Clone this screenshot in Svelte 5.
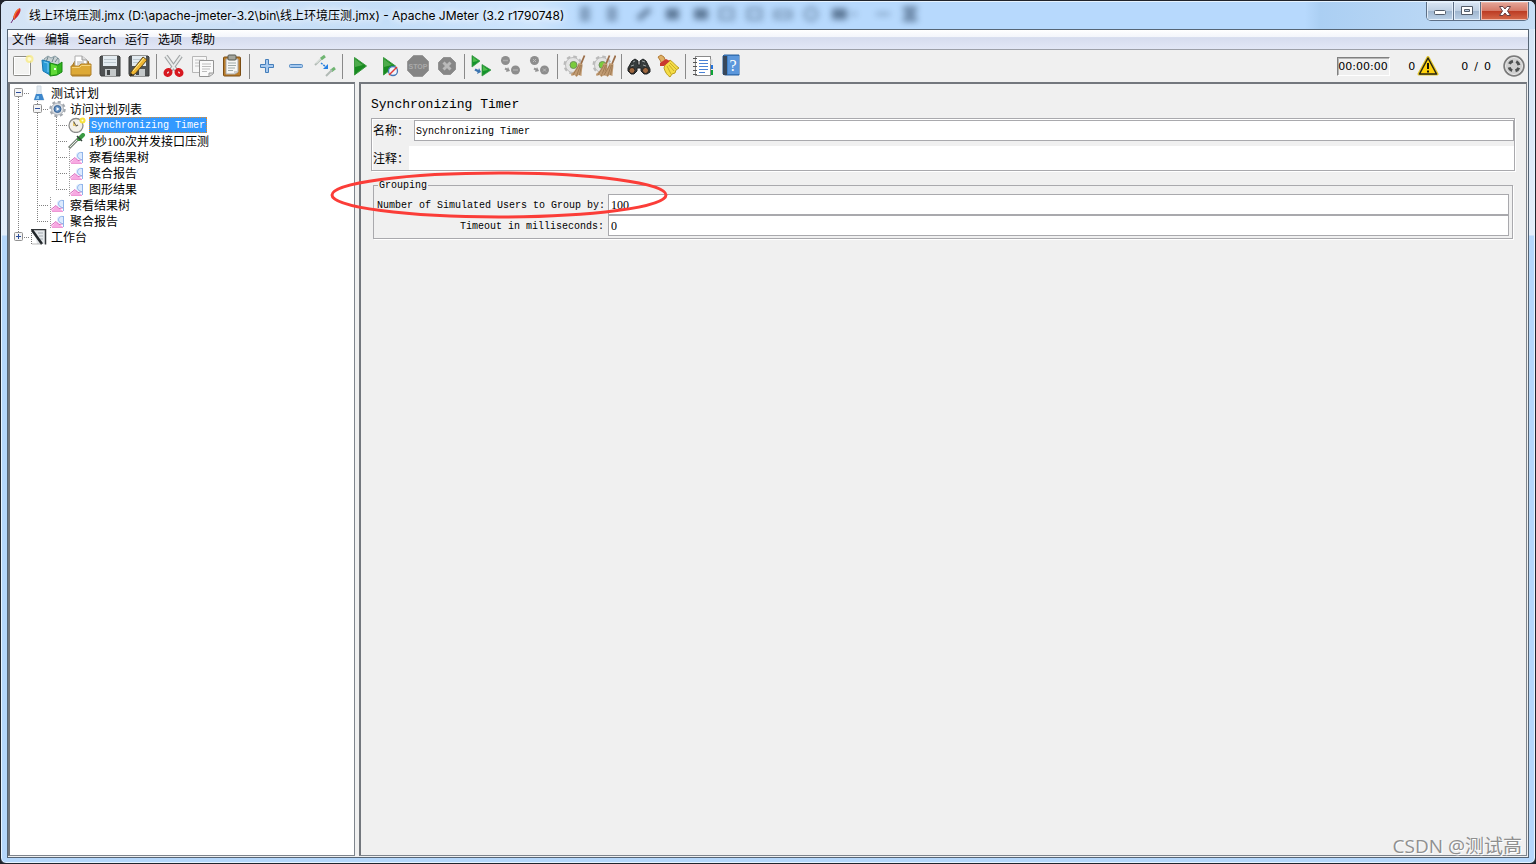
<script lang="ts">
	type Cell = 'line' | 'tee' | 'end' | 'minus' | 'plus'
	type Node = { label: string; icon: string; cells: Cell[]; latin?: boolean }

	const menus = ['文件', '编辑', 'Search', '运行', '选项', '帮助']

	const tools: string[][] = [
		['new', 'templates', 'open', 'save', 'save as'],
		['cut', 'copy', 'paste'],
		['expand', 'collapse', 'toggle'],
		['start', 'start no pauses', 'stop', 'shutdown'],
		['remote start', 'remote stop', 'remote shutdown'],
		['clear', 'clear all'],
		['search', 'reset search'],
		['functions', 'help']
	]

	const nodes: Node[] = [
		{ label: '测试计划', icon: 'plan', cells: ['minus'] },
		{ label: '访问计划列表', icon: 'gear', cells: ['line', 'minus'] },
		{ label: 'Synchronizing Timer', icon: 'timer', cells: ['line', 'line', 'tee'], latin: true },
		{ label: '1秒100次并发接口压测', icon: 'sampler', cells: ['line', 'line', 'tee'] },
		{ label: '察看结果树', icon: 'chart', cells: ['line', 'line', 'tee'] },
		{ label: '聚合报告', icon: 'chart', cells: ['line', 'line', 'tee'] },
		{ label: '图形结果', icon: 'chart', cells: ['line', 'line', 'end'] },
		{ label: '察看结果树', icon: 'chart', cells: ['line', 'tee'] },
		{ label: '聚合报告', icon: 'chart', cells: ['line', 'end'] },
		{ label: '工作台', icon: 'bench', cells: ['plus'] }
	]

	let selected = $state(2)
	let name = $state('Synchronizing Timer')
	let comment = $state('')
	let groupSize = $state('100')
	let timeout = $state('0')
</script>

{#snippet cell(kind: Cell, first: boolean)}
	<svg class="cell" viewBox="0 0 19 16" aria-hidden="true">
		<g stroke="#808080" stroke-dasharray="1 1" fill="none">
			{#if !first}<path d="M8.5 0V8" />{/if}
			{#if kind !== 'end' && kind !== 'plus'}<path d="M8.5 8V16" />{/if}
			{#if kind !== 'line'}<path d="M8 8.5H19" />{/if}
		</g>
		{#if kind === 'minus' || kind === 'plus'}
			<rect x="4.5" y="3.5" width="8" height="8" rx="1" fill="#f4f4f4" stroke="#919191" />
			<path d="M6 7.5h5" stroke="#2b4d9b" />
			{#if kind === 'plus'}<path d="M8.5 5v5" stroke="#2b4d9b" />{/if}
		{/if}
	</svg>
{/snippet}

{#snippet broom(x: number)}
	<g transform="translate({x} 0)">
		<path d="M21.5 1.500L18 10" stroke="#9a6d48" stroke-width="1.800" />
		<path d="M15.500 9l4 1c0 4-1 8-1 12l-3-1-2 2-2-2-3 1-.5-2c4-3 6-6 7.500-11z" fill="#c19b72" />
		<path d="M16 11l-6 10M17.500 11l-4 11M18.500 11l-2 10" stroke="#98734d" stroke-width=".8" />
	</g>
{/snippet}

{#snippet smallGear()}
	<circle cx="10" cy="11" r="8" stroke="#b9b9b9" stroke-width="3" stroke-dasharray="3.500 2.780" />
	<circle cx="10" cy="11" r="7.500" fill="#e4e4e4" stroke="#bdbdbd" />
	<circle cx="10.500" cy="11" r="3.500" fill="#79cc3c" stroke="#6d9357" />
{/snippet}

{#snippet tool(kind: string)}
	<svg class="icon" viewBox="0 0 24 24" fill="none" aria-hidden="true">
		{#if kind === 'new'}
			<rect x="2.500" y="2.500" width="17" height="19" rx="1" fill="#f3f3f1" stroke="#8d8d89" />
			<rect x="3.500" y="3.500" width="15" height="17" stroke="#fff" />
			<circle cx="18.500" cy="5" r="4" fill="#f7eb86" opacity=".8" />
			<circle cx="18.500" cy="5" r="2" fill="#fffbd0" />
		{:else if kind === 'templates'}
			<path d="M4 5l4-3 3 2 4-2 4 3v8H4z" fill="#c8d1d3" stroke="#879ca4" />
			<path d="M8 3l-2 5M14 3l-2 5M18 4l-3 4" stroke="#6e838a" />
			<path d="M2 6l8 2v13l-7-4z" fill="#2b9bd7" stroke="#1677b3" />
			<path d="M4 8l4 1v9" stroke="#78cdf4" />
			<path d="M10 9l8 2 4-3v10l-5 3-7 1z" fill="#32b41d" stroke="#178711" />
			<path d="M11 10l6 2v8l-6 1z" fill="#62da38" />
			<path d="M14 14h2v2h-2z" fill="#e9ffe0" />
		{:else if kind === 'open'}
			<path d="M3 12l3-5h13l2 6v9H3z" fill="#c68b1f" stroke="#a57624" />
			<path d="M6 2h7l5 4v8H6z" fill="#fff" stroke="#acacac" />
			<path d="M13 2v4h5" fill="#ddd" stroke="#999" />
			<path d="M8 8h7M8 10h8" stroke="#aaa" />
			<path d="M2 12h8l2-2h10v11H2z" fill="#dda936" stroke="#b1812a" />
			<path d="M3 13.500h7.500l2-2h9" stroke="#f6d67f" />
		{:else if kind === 'save' || kind === 'save as'}
			<path d="M3 2h18l1 1v19H3l-1-2V3z" fill="#505354" stroke="#3a3c3d" />
			<rect x="5" y="2" width="14" height="10" fill="#e3ebf0" />
			<path d="M6 5.500h12M6 8.500h12" stroke="#bcc8cf" />
			<rect x="7" y="15" width="11" height="7" fill="#c4c8c9" />
			<rect x="9" y="16" width="3" height="5" fill="#424647" />
			{#if kind === 'save as'}
				<path d="M4 18L16 3l4 3L8 20l-5 2z" fill="#efb632" stroke="#5f4719" />
				<path d="M6 17L17 4" stroke="#fff09a" />
				<path d="M3 22l1-3 2 2z" fill="#222" />
			{/if}
		{:else if kind === 'cut'}
			<path d="M4 2l10 14M19 2L9 16" stroke="#a1a5a6" stroke-width="4" />
			<path d="M4 2l10 14M19 2L9 16" stroke="#e9ebeb" stroke-width="2" />
			<ellipse cx="6" cy="18.500" rx="2.500" ry="3" stroke="#d71820" stroke-width="3.500" transform="rotate(45 6 18.500)" />
			<ellipse cx="17" cy="18.500" rx="2.500" ry="3" stroke="#d71820" stroke-width="3.500" transform="rotate(-45 17 18.500)" />
		{:else if kind === 'copy'}
			<path d="M1.500 2.500h14v16h-14z" fill="#f7f7f7" stroke="#b7b7b7" />
			<path d="M4 6h9M4 9h5M4 12h4" stroke="#c2c2c2" />
			<path d="M8.500 6.500h14v13l-4 3h-10z" fill="#fafafa" stroke="#939393" />
			<path d="M18 22v-3h4" fill="#ddd" stroke="#999" />
			<path d="M11 10h9M11 12.500h9M11 15h8M11 17.500h5" stroke="#bcbcbc" />
		{:else if kind === 'paste'}
			<rect x="3.500" y="3" width="17" height="19" rx="1" fill="#bb7d29" stroke="#7b4d14" />
			<path d="M6 5h12v13l-3 2H6z" fill="#f6f6f3" stroke="#aaa" />
			<rect x="8" y="1" width="8" height="5" rx="1" fill="#a2a49c" stroke="#555850" />
			<path d="M8 9h8M8 11.500h8M8 14h7M8 16.500h5" stroke="#9eaaa8" />
			<path d="M14 20v-3h4" fill="#ccc" />
		{:else if kind === 'expand'}
			<path d="M10.500 5.500h3v5h5v3h-5v5h-3v-5h-5v-3h5z" fill="#a6c9ef" stroke="#457eba" />
		{:else if kind === 'collapse'}
			<rect x="5.500" y="10.500" width="13" height="3" rx="1" fill="#a6c9ef" stroke="#5288c0" />
		{:else if kind === 'toggle'}
			<path d="M2 11l7-7" stroke="#b1bab5" stroke-width="2" />
			<path d="M3 9.500l6-6" stroke="#f4faf4" />
			<path d="M8 5l4-3M18 17l4-3" stroke="#6fb571" stroke-width="3" />
			<path d="M13 22l6-6" stroke="#b1bab5" stroke-width="2" />
			<path d="M8 9l5 4" stroke="#2f82dd" stroke-width="1.500" stroke-dasharray="2 1" />
			<path d="M15 10v5h-5z" fill="#2680e4" />
		{:else if kind === 'start' || kind === 'start no pauses'}
			<path d="M6.500 3.500l12 8.500-12 9z" fill="#198b21" stroke="#3c9a41" />
			<path d="M7 5l8 6-8 2z" fill="#65bb60" opacity=".7" />
			{#if kind === 'start no pauses'}
				<circle cx="16" cy="17" r="4.500" fill="#eef4fc" stroke="#4778b7" stroke-width="1.300" />
				<path d="M12 21l8-8" stroke="#e33a35" stroke-width="1.500" />
			{/if}
		{:else if kind === 'stop'}
			<path d="M7.500 1.500h9l6 6v9l-6 6h-9l-6-6v-9z" fill="#858585" stroke="#999" />
			<text x="12" y="15" text-anchor="middle" class="stop-text">STOP</text>
		{:else if kind === 'shutdown'}
			<path d="M8.500 3.500h7l5 5v7l-5 5h-7l-5-5v-7z" fill="#878787" stroke="#939393" />
			<path d="M8.500 8.500l7 7m0-7l-7 7" stroke="#bababa" stroke-width="3" />
		{:else if kind === 'remote start'}
			<path d="M2 1.500l8 5.500-8 6zM12 10.500l9 5.500-9 6z" fill="#13942b" stroke="#3c9948" stroke-width=".8" />
			<path d="M3 3l5 4-5 1zM13 12l5 4-5 1z" fill="#4fba4c" />
			<path d="M5 15.500l4 2" stroke="#3b74b0" stroke-width="2.500" />
			<path d="M9 14l2 4-4 2z" fill="#3b74b0" />
		{:else if kind.startsWith('remote')}
			<circle cx="6.500" cy="6.500" r="4.500" fill="#8d8d8d" />
			<circle cx="16.500" cy="16" r="4.500" fill="#8d8d8d" />
			<path d="M6 14.500l3 1.500" stroke="#969696" stroke-width="2" />
			<path d="M9 13l2 4-4 1z" fill="#929292" />
			{#if kind === 'remote stop'}
				<path d="M4 6.500h5M14 16h5" stroke="#aaa" stroke-width="1.500" />
			{:else}
				<path d="M5 5l3 3m0-3l-3 3M15 14.500l3 3m0-3l-3 3" stroke="#bbb" />
			{/if}
		{:else if kind === 'clear'}
			{@render smallGear()}
			{@render broom(0)}
		{:else if kind === 'clear all'}
			{@render smallGear()}
			{@render broom(-4)}
			{@render broom(2)}
		{:else if kind === 'search'}
			<path d="M5 7l3-2 3 2v4h2V7l3-2 3 2 4 8v3l-3 2h-3l-3-3v-3h-4v3l-3 3H4l-3-3v-3z" fill="#363c3d" stroke="#202324" />
			<circle cx="5" cy="16.500" r="3" fill="#a1683f" stroke="#202020" />
			<circle cx="18.500" cy="16.500" r="3" fill="#a1683f" stroke="#202020" />
			<path d="M6 8l2-1M15 7l3 1M4 12l3-1M16 11l3 1" stroke="#9ba1a1" />
		{:else if kind === 'reset search'}
			<path d="M2 3l3-2 3 2 2 5-4 2-2-4z" fill="#dfb066" stroke="#b27b35" />
			<path d="M9 11l5-5c4 3 6 6 9 8l-3 2-1 3-3 1-2 3c-3-2-5-5-6-9z" fill="#f4dc45" stroke="#bc9d1f" />
			<path d="M11 12l4 8M13 11l5 6M14 9l6 6" stroke="#c9ac26" />
			<path d="M4 9l6-4 4 2-6 5-4 0z" fill="#ca3930" />
		{:else if kind === 'functions'}
			<rect x="4.500" y="2.500" width="15" height="19" fill="#fff" stroke="#8a8a8a" />
			<path d="M20.500 5v5" stroke="#ddd" stroke-width="2" />
			<path d="M21 11v4" stroke="#2473dc" stroke-width="2" />
			<path d="M21 16v5" stroke="#0ba536" stroke-width="2" />
			<path d="M8 6.500h9M8 9.500h9M8 12.500h9M8 15.500h9M8 18.500h6" stroke="#4a82d5" />
			<path d="M2 4.500h4M2 8.500h4M2 12.500h4M2 16.500h4M2 20.500h4" stroke="#555" />
		{:else}
			<path d="M3 2l1-1h15v20H5l-2-1z" fill="#3f80c8" stroke="#2b62a2" />
			<path d="M3 2h4v19H3z" fill="#38475a" />
			<path d="M8 2h11v18H8z" fill="#5b97dc" />
			<text x="13" y="17" text-anchor="middle" class="help-text">?</text>
		{/if}
	</svg>
{/snippet}

{#snippet nodeIcon(kind: string)}
	<svg class="node-icon" viewBox="0 0 19 16" fill="none" aria-hidden="true">
		{#if kind === 'plan'}
			<path d="M8 1h4v6l3 8H5l3-8z" fill="#e3ebf2" stroke="#d0dae2" />
			<path d="M7 9h6l2 6H5z" fill="#3c86cc" />
			<path d="M8 11h2v3H7z" fill="#8ccaf2" />
		{:else if kind === 'gear'}
			<circle cx="9.500" cy="8" r="7" stroke="#a3a8ae" stroke-width="2.500" stroke-dasharray="3 2.500" />
			<circle cx="9.500" cy="8" r="6" fill="#dcdfe3" stroke="#aeb3b9" />
			<circle cx="9.500" cy="8" r="3.500" fill="#5d8cc0" stroke="#3b6596" />
			<path d="M8.500 6l3 2-3 2z" fill="#fff" />
		{:else if kind === 'timer'}
			<circle cx="9" cy="8.500" r="7" fill="#f4f1e8" stroke="#8c8c8c" stroke-width="1.300" />
			<path d="M9 9L6.500 4.500M9 9l2-1" stroke="#5f5a4c" stroke-width="1.300" />
			<path d="M9 9L6 5v4z" fill="#e3c46a" />
			<circle cx="15.500" cy="3.500" r="3" fill="#f7e23c" />
			<circle cx="15.500" cy="3.500" r="1" fill="#fffde0" />
		{:else if kind === 'sampler'}
			<path d="M2 15L12 5" stroke="#7b857b" stroke-width="3" />
			<path d="M3 14l8-8" stroke="#e6efe6" />
			<path d="M12 6l4-4" stroke="#3b9a43" stroke-width="4" stroke-linecap="round" />
			<path d="M10 3l5 5" stroke="#33413a" stroke-width="1.500" />
		{:else if kind === 'chart'}
			<path d="M2.500 0v16" stroke="#999" stroke-dasharray="1 1" />
			<path d="M3 14l5-5 3 2 4 3z" fill="#f7a9e2" />
			<path d="M3 12.500l5-4 3 3 5-1" stroke="#d766bd" />
			<circle cx="12.500" cy="6.500" r="3.500" fill="#dceafe" />
			<path d="M15 3.500c-4-1-6 4-3 6l4 2M15.500 3v11" stroke="#8fb4ea" />
			<path d="M4 14.500h11" stroke="#ee9ad6" />
		{:else}
			<path d="M5 1h11v14H8z" fill="#e4e7ea" />
			<path d="M2 .5h14.500v15" stroke="#333639" stroke-width="1.500" />
			<path d="M9 4h5M10 7h4M11 10h3" stroke="#a4abb1" />
			<path d="M3 1l10 14" stroke="#22272a" stroke-width="2.500" />
			<path d="M2.500 2v13H13" stroke="#777" stroke-dasharray="1 1" />
		{/if}
	</svg>
{/snippet}

<div class="window">
	<header class="titlebar">
		<svg class="feather" viewBox="0 0 12 16" aria-hidden="true">
			<path d="M10 0c2 3-2 9-6 12l-1-2c1-4 3-8 7-10z" fill="#d4272e" />
			<path d="M9 1C5 4 4 8 4 12" fill="none" stroke="#f2722b" stroke-width="1.500" />
			<path d="M4 10l-3 5" stroke="#72307b" />
		</svg>
		<h1>线上环境压测.jmx (D:\apache-jmeter-3.2\bin\线上环境压测.jmx) - Apache JMeter (3.2 r1790748)</h1>
		<!-- toolbar of the window behind, seen through the glass -->
		<svg class="behind" viewBox="0 0 360 27" aria-hidden="true">
			<g fill="none" stroke="#47617f" stroke-width="3">
				<path d="M8 7h10M8 12h10M8 17h10M35 7h10M35 12h10M35 17h10" />
				<path d="M66 17l12-10" stroke-width="5" />
				<path d="M94 12h13" stroke-width="11" />
				<path d="M122 12h14" stroke-width="11" />
				<path d="M148 7h13v10h-13zM176 7h13v10h-13zM203 9h16v7h-16z" opacity=".7" />
				<circle cx="239" cy="12" r="6" opacity=".7" />
				<path d="M260 12h15" stroke-width="11" />
				<path d="M279 12h6M304 12h14" opacity=".6" />
				<path d="M331 6l14 12m0-12l-14 12M332 6h12M332 18h12" />
			</g>
		</svg>
		<div class="controls">
			<button aria-label="Minimize">
				<svg viewBox="0 0 14 12"><rect x="1.500" y="5.500" width="11" height="4" rx="1" fill="#fff" stroke="#535c69" /></svg>
			</button>
			<button aria-label="Maximize">
				<svg viewBox="0 0 14 12"><path d="M1.500 1.500h11v8h-11zM4.500 4.500v2h5v-2z" fill="#fff" fill-rule="evenodd" stroke="#535c69" /></svg>
			</button>
			<button class="close" aria-label="Close">
				<svg viewBox="0 0 14 12"><path d="M1.500 1.500h3.500l2 2.500 2-2.500h3.500L9.500 6l3 4.500H9L7 8l-2 2.500H1.500l3-4.500z" fill="#fff" stroke="#674044" /></svg>
			</button>
		</div>
	</header>

	<div class="frame">
		<nav class="menubar">
			{#each menus as menu}
				<button>{menu}</button>
			{/each}
		</nav>

		<div class="toolbar">
			{#each tools as group, i}
				{#if i > 0}<span class="sep"></span>{/if}
				{#each group as kind}
					<button class="tool" aria-label={kind}>{@render tool(kind)}</button>
				{/each}
			{/each}
			<div class="status">
				<input class="elapsed" aria-label="Elapsed time" value="00:00:00" readonly />
				<span class="errors">0</span>
				<svg class="warning" viewBox="0 0 22 20" aria-hidden="true">
					<path d="M11 1.500l9 16.500H2z" fill="#ffd51d" stroke="#e3c62c" stroke-width="3" stroke-linejoin="round" />
					<path d="M11 2l8.500 16h-17z" fill="#ffd20c" stroke="#292613" stroke-width="1.500" stroke-linejoin="round" />
					<path d="M11 7v6M11 14.500v2" stroke="#171509" stroke-width="2" />
				</svg>
				<span class="threads"><span>0</span><span>/</span><span>0</span></span>
				<svg class="remote" viewBox="0 0 24 24" aria-hidden="true">
					<circle cx="12" cy="12" r="10" fill="#929292" stroke="#7a7a7a" stroke-width="1.500" />
					<circle cx="12" cy="12" r="8.500" fill="#cfcfcf" stroke="#ececec" />
					<circle cx="12" cy="12" r="5" fill="none" stroke="#4d5050" stroke-width="3" stroke-dasharray="4.400 3.454" stroke-dashoffset="-1.730" />
				</svg>
			</div>
		</div>

		<div class="split">
			<div class="tree" role="tree">
				{#each nodes as node, i}
					<div class="node" role="treeitem" aria-selected={selected === i}>
						{#each node.cells as kind}
							{@render cell(kind, i === 0)}
						{/each}
						{@render nodeIcon(node.icon)}
						<button class="label" class:latin={node.latin} class:selected={selected === i} onclick={() => (selected = i)}>{node.label}</button>
					</div>
				{/each}
			</div>

			<main class="panel">
				<h2>Synchronizing Timer</h2>

				<div class="props">
					<div class="prop">
						<label for="name">名称：</label>
						<input id="name" class="boxed" bind:value={name} />
					</div>
					<div class="prop">
						<label for="comment">注释：</label>
						<input id="comment" bind:value={comment} />
					</div>
				</div>

				<fieldset>
					<legend>Grouping</legend>
					<div class="grid">
						<label for="group">Number of Simulated Users to Group by:</label>
						<input id="group" bind:value={groupSize} />
						<label for="timeout">Timeout in milliseconds:</label>
						<input id="timeout" bind:value={timeout} />
					</div>
				</fieldset>

				<svg class="marker" viewBox="0 0 338 50" aria-hidden="true">
					<ellipse cx="169" cy="25" rx="167" ry="22" fill="none" stroke="#fb3d38" stroke-width="3" />
				</svg>
			</main>
		</div>
	</div>

	<div class="watermark">CSDN @测试高</div>
</div>

<style>
	:global(body) {
		margin: 0;
		background: #20242c;
	}

	* {
		box-sizing: border-box;
	}

	button,
	input {
		margin: 0;
		padding: 0;
		border: 0;
		background: none;
		font: inherit;
		color: inherit;
	}

	.window {
		--etch: #a9a9ad;
		--mono: 'Liberation Mono', 'Noto Sans CJK SC', monospace;
		--ui: 'Open Sans', 'Noto Sans CJK SC', sans-serif;

		position: relative;
		display: flex;
		flex-direction: column;
		height: 100vh;
		padding: 0 6px 5px;
		border: 1px solid #20242c;
		border-radius: 7px 7px 6px 6px;
		background: linear-gradient(#d3e4f6, #e3eefa 234px, #b5d7fb 235px);
		box-shadow: inset 0 0 0 1px #e6f3ff;
		font-family: var(--ui);
		font-size: 12px;
		color: #000;
		overflow: hidden;
	}

	.titlebar {
		display: flex;
		align-items: center;
		flex: none;
		height: 28px;
		margin: 0 -6px;
		padding-left: 9px;
		border-top: 1px solid #e6f3ff;
		background: linear-gradient(90deg, #d5e4f5, #c4def8 25%, #cde5fd 35%, #b7d9fd 38%, #b7d9fd 85%, #abcff3 86%, #c7def6);
	}

	.feather {
		width: 12px;
		height: 16px;
		margin-right: 7px;
	}

	h1 {
		margin: 0;
		font-family: Inter, 'Noto Sans CJK SC', sans-serif;
		font-size: 12px;
		font-weight: 400;
		line-height: 26px;
		white-space: nowrap;
		text-shadow: 0 0 6px #fff, 0 0 8px #fff;
	}

	.behind {
		width: 360px;
		height: 27px;
		margin-left: 8px;
		opacity: 0.8;
		filter: blur(3px);
	}

	.controls {
		display: flex;
		align-self: flex-start;
		height: 19px;
		margin-left: auto;
		margin-right: 6px;
		border: 1px solid #5d6f86;
		border-top: 0;
		border-radius: 0 0 5px 5px;
		overflow: hidden;
	}

	.controls button {
		display: grid;
		place-items: center;
		width: 27px;
		border-right: 1px solid #5d6f86;
		background: linear-gradient(#d9e6f4, #bfd0e3 48%, #9eb5ce 50%, #bdd2e8);
		box-shadow: inset 0 0 0 1px #e3eef9;
	}

	.controls .close {
		width: 47px;
		border-right: 0;
		background: linear-gradient(#e5a79a, #d57a68 48%, #bb3a22 50%, #d56a4b);
		box-shadow: inset 0 0 0 1px #efb9ab;
	}

	.controls svg {
		width: 14px;
		height: 12px;
	}

	.frame {
		display: flex;
		flex: 1;
		flex-direction: column;
		min-height: 0;
		border: 1px solid #566575;
		background: #f0f0f0;
	}

	.menubar {
		display: flex;
		flex: none;
		gap: 9px;
		height: 20px;
		padding-left: 4px;
		border-bottom: 1px solid #9c9fa8;
		background: linear-gradient(#fff, #f4f6fb 35%, #d6dcee 40%, #e2e7f6);
	}

	.menubar button {
		line-height: 19px;
	}

	.toolbar {
		display: flex;
		align-items: center;
		flex: none;
		height: 32px;
	}

	.tool {
		display: grid;
		place-items: center;
		width: 29px;
		height: 30px;
	}

	.icon {
		width: 24px;
		height: 24px;
	}

	.stop-text {
		font: 700 7px 'Liberation Sans', sans-serif;
		fill: #aaa;
	}

	.help-text {
		font: 16px 'Liberation Serif', serif;
		fill: #fff;
	}

	.sep {
		width: 6px;
		height: 25px;
		background: linear-gradient(#898989, #898989) 3px 0 / 1px 100% no-repeat;
	}

	.status {
		display: flex;
		align-items: center;
		margin-left: auto;
		font-family: 'DejaVu Sans', sans-serif;
		font-size: 11px;
	}

	.elapsed {
		width: 53px;
		height: 19px;
		margin-right: 18px;
		border: 1px solid;
		border-color: #808080 #fff #fff #808080;
		box-shadow: inset 1px 1px #b5b5b5;
	}

	.warning {
		width: 22px;
		height: 20px;
		margin-left: 2px;
	}

	.threads {
		display: flex;
		gap: 6px;
		margin: 0 11px 0 22px;
	}

	.remote {
		width: 24px;
		height: 24px;
		margin-right: 2px;
	}

	.split {
		display: flex;
		flex: 1;
		gap: 4px;
		min-height: 0;
		padding-bottom: 1px;
		padding-right: 1px;
	}

	.tree,
	.panel {
		border: 1px solid #7f858d;
		border-top: 2px solid #73777d;
		border-left: 2px solid #73777d;
	}

	.tree {
		flex: none;
		width: 347px;
		padding-top: 1px;
		background: #fff;
	}

	.node {
		display: flex;
		height: 16px;
	}

	.cell,
	.node-icon {
		flex: none;
		width: 19px;
		height: 16px;
	}

	.label {
		height: 16px;
		margin-left: 3px;
		border: 1px solid transparent;
		border-width: 1px 0;
		font-family: 'Liberation Serif', 'Noto Sans CJK SC', serif;
		line-height: 16px;
		white-space: nowrap;
	}

	.label.latin {
		font-family: var(--mono);
		font-size: 10px;
	}

	.label.selected {
		padding: 0 1px;
		border: 1px dotted #e08a2c;
		background: #3399ff;
		color: #fff;
	}

	.panel {
		position: relative;
		flex: 1;
		min-width: 0;
		padding: 10px 11px 0 10px;
		font-family: var(--mono);
		font-size: 10px;
	}

	h2 {
		margin: 0;
		font-size: 13px;
		font-weight: 400;
		line-height: 22px;
	}

	.props {
		display: flex;
		flex-direction: column;
		gap: 5px;
		margin-top: 2px;
		padding: 1px 0 0 1px;
		border: 1px solid var(--etch);
		box-shadow: 1px 1px #fff, inset 1px 1px #fff;
	}

	.prop {
		display: flex;
		height: 24px;
	}

	.prop label {
		width: 36px;
		font-size: 12px;
		line-height: 28px;
		white-space: nowrap;
	}

	.prop input {
		flex: 1;
		padding: 2px 0 0 1px;
		background: #fff;
	}

	.prop:first-child {
		height: 21px;
	}

	.prop:first-child label {
		width: 41px;
		line-height: 24px;
	}

	.prop .boxed {
		border: 1px solid var(--etch);
	}

	fieldset {
		min-width: 0;
		margin: 8px 2px 0;
		padding: 0 3px 2px;
		border: 1px solid var(--etch);
		box-shadow: 1px 1px #fff;
	}

	legend {
		height: 12px;
		margin-left: 1px;
		padding: 0 1px;
		line-height: 14px;
	}

	.grid {
		display: grid;
		grid-template-columns: 231px 1fr;
		margin-top: 3px;
	}

	.grid label {
		padding-right: 4px;
		text-align: right;
		line-height: 23px;
		height: 21px;
		white-space: nowrap;
	}

	.grid input {
		height: 21px;
		padding: 2px 0 0 2px;
		border: 1px solid var(--etch);
		background: #fff;
		font-family: 'Liberation Serif', serif;
		font-size: 12px;
	}

	.marker {
		position: absolute;
		left: -31px;
		top: 86px;
		width: 338px;
		height: 50px;
		pointer-events: none;
	}

	.watermark {
		position: absolute;
		right: 13px;
		bottom: 4px;
		font-size: 19px;
		line-height: 26px;
		color: #8f8f8f;
		text-shadow: 1px 1px #fff;
	}
</style>
